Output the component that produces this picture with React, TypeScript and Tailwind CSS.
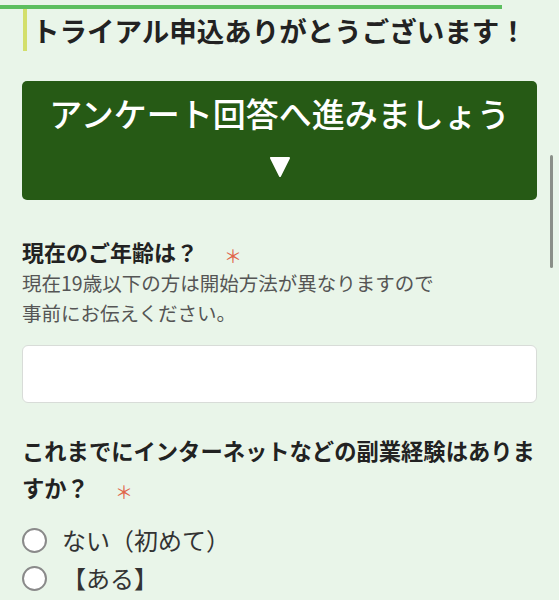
const jp = "font-['Noto_Sans_CJK_JP','Noto_Sans',sans-serif]";

const options = ["ない（初めて）", "【ある】"];

function Required() {
  return (
    <span className="ml-[26px] inline-block align-middle text-[18px] leading-none font-normal text-[#e0644a]">＊</span>
  );
}

export default function App() {
  return (
    <div className={`relative min-h-screen bg-[#e9f5e9] ${jp}`}>
      {/* progress */}
      <div className="pt-[5px]">
        <div className="h-[4px] w-[502px] bg-[#5cbf5f]" />
      </div>

      <div className="px-[22px]">
        <h1 className="ml-[1px] border-l-4 border-[#d3df6c] pl-[5px] text-[27.5px] leading-[42px] font-bold text-[#222]">
          トライアル申込ありがとうございます！
        </h1>

        <button className="mt-[30px] flex h-[119px] w-full flex-col items-center rounded-[5px] bg-[#265a15] pt-[14px] text-white">
          <span className="text-[33px] leading-[36px] font-medium">アンケート回答へ進みましょう</span>
          <svg className="mt-[25px]" width="22" height="22" viewBox="0 0 22 22" aria-hidden>
            <polygon points="2,2 20,2 11,20" fill="#fff" stroke="#fff" strokeWidth="2" strokeLinejoin="round" />
          </svg>
        </button>

        <section className="mt-[35px]">
          <h2 className="h-[32px] text-[22px] leading-[32px] font-bold text-[#222]">
            現在のご年齢は？
            <Required />
          </h2>
          <p className="mt-[1px] text-[19.5px] leading-[30px] text-[#555]">
            現在19歳以下の方は開始方法が異なりますので
            <br />
            事前にお伝えください。
          </p>
          <input
            type="text"
            className="mt-[17px] block h-[58px] w-full rounded-[6px] border border-[#d8dcd8] bg-white px-3 text-[18px] outline-none"
          />
        </section>

        <section className="mt-[29px]">
          <h2 className="text-[22.3px] leading-[37px] font-bold text-[#222]">
            これまでにインターネットなどの副業経験はありますか？
            <Required />
          </h2>
          <div className="mt-[15px] flex flex-col">
            {options.map((o) => (
              <label key={o} className="flex h-[38px] items-center gap-[15px] text-[24px] text-[#333]">
                <span className="h-[25px] w-[25px] shrink-0 rounded-full border-2 border-[#8a8a8a] bg-white" />
                {o}
              </label>
            ))}
          </div>
        </section>
      </div>

      {/* scroll indicator */}
      <div className="absolute right-[6px] top-[155px] h-[113px] w-[3px] rounded-full bg-[#8a8f88]" />
    </div>
  );
}
